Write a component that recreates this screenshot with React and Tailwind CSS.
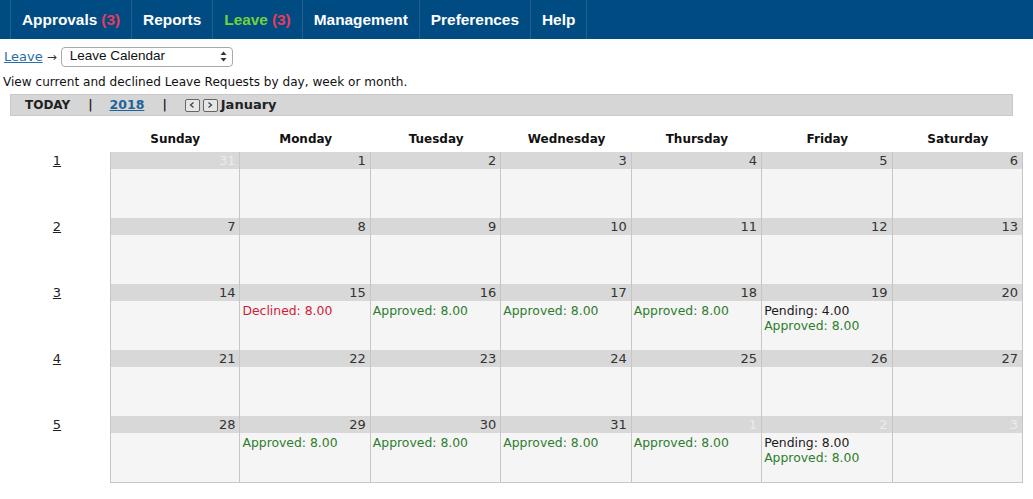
import React from "react";

const navItems = [
  { label: "Approvals", count: 3 },
  { label: "Reports" },
  { label: "Leave", count: 3, active: true },
  { label: "Management" },
  { label: "Preferences" },
  { label: "Help" },
];

const dayNames = ["Sunday", "Monday", "Tuesday", "Wednesday", "Thursday", "Friday", "Saturday"];

// each week: [day number, faded (other month), entries]
const weeks = [
  [[31, true], [1], [2], [3], [4], [5], [6]],
  [[7], [8], [9], [10], [11], [12], [13]],
  [
    [14],
    [15, false, [["Declined: 8.00", "red"]]],
    [16, false, [["Approved: 8.00", "green"]]],
    [17, false, [["Approved: 8.00", "green"]]],
    [18, false, [["Approved: 8.00", "green"]]],
    [19, false, [["Pending: 4.00", "black"], ["Approved: 8.00", "green"]]],
    [20],
  ],
  [[21], [22], [23], [24], [25], [26], [27]],
  [
    [28],
    [29, false, [["Approved: 8.00", "green"]]],
    [30, false, [["Approved: 8.00", "green"]]],
    [31, false, [["Approved: 8.00", "green"]]],
    [1, true, [["Approved: 8.00", "green"]]],
    [2, true, [["Pending: 8.00", "black"], ["Approved: 8.00", "green"]]],
    [3, true],
  ],
];

const entryColor = {
  red: "text-[#d41a35]",
  green: "text-[#2e7d2e]",
  black: "text-[#1a1a1a]",
};

function NavButton({ dir }) {
  return (
    <span className="inline-flex items-center justify-center w-[15px] h-[13px] border border-[#666] rounded-[2px] bg-[#e6e6e6]">
      <svg width="8" height="8" viewBox="0 0 8 8">
        {dir === "prev" ? (
          <path d="M5.5 1.5 L2.5 4 L5.5 6.5" fill="none" stroke="#444" strokeWidth="1.3" />
        ) : (
          <path d="M2.5 1.5 L5.5 4 L2.5 6.5" fill="none" stroke="#444" strokeWidth="1.3" />
        )}
      </svg>
    </span>
  );
}

function DayCell({ day, last, first }) {
  const [num, faded, entries] = day;
  return (
    <div
      className={`border-r border-[#c6c6c6] ${first ? "border-l" : ""} ${last ? "border-b" : ""}`}
    >
      <div
        className={`h-[17px] bg-[#d8d8d8] text-right pr-[4px] text-[13px] leading-[17px] ${
          faded ? "text-[#ececec]" : "text-[#333]"
        }`}
      >
        {num}
      </div>
      <div className="h-[49px] bg-[#f5f5f5] pl-[2px] pt-[2px] text-[12.4px] leading-[15px]">
        {(entries || []).map(([text, color], i) => (
          <div key={i} className={entryColor[color]}>
            {text}
          </div>
        ))}
      </div>
    </div>
  );
}

export default function App() {
  return (
    <div className="w-[1033px] h-[499px] bg-white text-[#111] overflow-hidden font-['DejaVu_Sans',Verdana,sans-serif]">
      <nav className="h-[39px] bg-[#004b82] pl-[10px] flex font-['Liberation_Sans',Arial,sans-serif]">
        {navItems.map((item, i) => (
          <div
            key={item.label}
            className={`flex items-center px-[11px] border-l border-[#24608f] text-[15.4px] font-bold ${
              i === navItems.length - 1 ? "border-r" : ""
            } ${item.active ? "text-[#72d23e]" : "text-white"}`}
          >
            {item.label}
            {item.count && <span className="ml-[4px] text-[#ea3a5c]">({item.count})</span>}
          </div>
        ))}
      </nav>

      <div className="mt-[8px] pl-[4px] flex items-center h-[19px] text-[13px]">
        <a href="#" className="text-[#2a6ea6] underline">
          Leave
        </a>
        <span className="mx-[4px] text-[#333] text-[12px]">→</span>
        <div className="w-[172px] h-[20px] border border-[#a9a9a9] rounded-[4px] bg-white flex items-center justify-between pl-[8px] pr-[5px] font-['Liberation_Sans',Arial,sans-serif] text-[13.5px]">
          <span>Leave Calendar</span>
          <svg width="7" height="11" viewBox="0 0 7 11">
            <path d="M0.5 4 L3.5 0.5 L6.5 4 Z" fill="#333" />
            <path d="M0.5 7 L3.5 10.5 L6.5 7 Z" fill="#333" />
          </svg>
        </div>
      </div>

      <p className="mt-[9px] pl-[3px] text-[12.1px] leading-[15px]">
        View current and declined Leave Requests by day, week or month.
      </p>

      <div className="ml-[10px] mt-[4px] w-[1003px] h-[22px] bg-[#d6d6d6] border border-[#c9c9c9] flex items-center pl-[14px] text-[12px] font-bold text-[#222]">
        <span>TODAY</span>
        <span className="ml-[18px]">|</span>
        <a href="#" className="ml-[17px] text-[#1f6496] underline text-[12.5px]">
          2018
        </a>
        <span className="ml-[18px]">|</span>
        <span className="ml-[18px] flex gap-[3px]">
          <NavButton dir="prev" />
          <NavButton dir="next" />
        </span>
        <span className="ml-[3px] text-[13px]">January</span>
      </div>

      <div className="w-[1023px] grid grid-cols-[110px_repeat(7,1fr)] mt-[14px] h-[22px] items-start text-[12px] font-bold">
        <div />
        {dayNames.map((d) => (
          <div key={d} className="text-center">
            {d}
          </div>
        ))}
      </div>

      <div className="w-[1023px] grid grid-cols-[110px_repeat(7,1fr)]">
        {weeks.map((week, wi) => (
          <React.Fragment key={wi}>
            <div className="pl-[4px] text-center text-[13px] leading-[17px]">
              <a href="#" className="underline text-[#222]">
                {wi + 1}
              </a>
            </div>
            {week.map((day, di) => (
              <DayCell key={di} day={day} first={di === 0} last={wi === weeks.length - 1} />
            ))}
          </React.Fragment>
        ))}
      </div>
    </div>
  );
}
